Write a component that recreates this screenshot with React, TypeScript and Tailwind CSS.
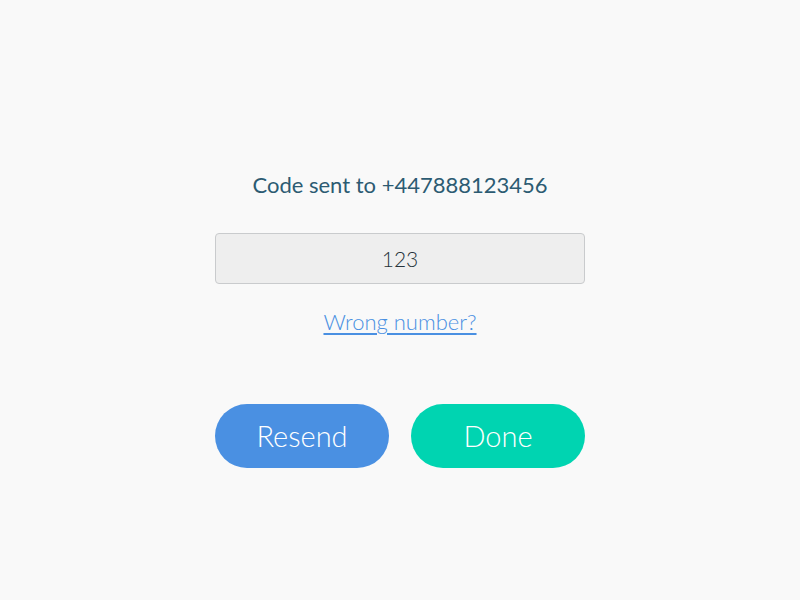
export default function App() {
  return (
    <div className="min-h-screen w-full bg-[#f9f9f9] flex justify-center font-['Lato',sans-serif]">
      <div className="w-[370px] flex flex-col items-center pt-[170px]">
        <h1 className="text-[22px] leading-[30px] text-[#2c5b72] font-normal">
          Code sent to +447888123456
        </h1>

        <div className="mt-[33px] w-full h-[51px] rounded-[4px] border border-[#c9cbcd] bg-[#eeeeee] flex items-center justify-center">
          <span className="text-[21px] font-light text-[#26323a]">123</span>
        </div>

        <a href="#" className="mt-[23px] text-[22px] leading-[30px] font-light text-[#4a90e2] underline underline-offset-[3px]">
          Wrong number?
        </a>

        <div className="mt-[67px] w-full flex justify-between">
          <button
            type="button"
            className="w-[174px] h-[64px] rounded-full bg-[#4a90e2] text-white text-[29px] font-light"
          >
            Resend
          </button>
          <button
            type="button"
            className="w-[174px] h-[64px] rounded-full bg-[#00d4b1] text-white text-[29px] font-light"
          >
            Done
          </button>
        </div>
      </div>
    </div>
  );
}
